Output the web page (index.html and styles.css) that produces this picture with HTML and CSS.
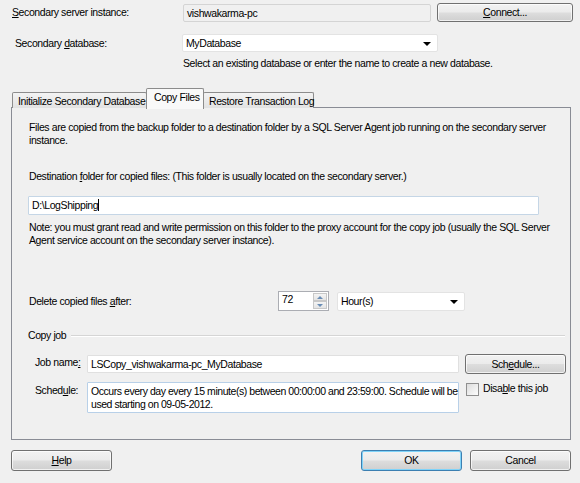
FILE: index.html
```html
<!DOCTYPE html>
<html>
<head>
<meta charset="utf-8">
<link rel="stylesheet" href="styles.css">
</head>
<body>
<div class="dlg">
  <div class="row r1">
    <span class="lbl l1"><u>S</u>econdary server instance:</span>
    <div class="ro">vishwakarma-pc</div>
    <button class="btn connect"><u>C</u>onnect...</button>
  </div>
  <div class="row r2">
    <span class="lbl l2">Secondary <u>d</u>atabase:</span>
    <div class="combo dbcombo"><span>MyDatabase</span><i class="arrow"></i></div>
  </div>
  <div class="hint">Select an existing database or enter the name to create a new database.</div>

  <div class="tabs">
    <div class="tab">Initialize Secondary Database</div>
    <div class="tab sel">Copy Files</div>
    <div class="tab">Restore Transaction Log</div>
  </div>
  <div class="panel">
    <p class="txt p1">Files are copied from the backup folder to a destination folder by a SQL Server Agent job running on the secondary server instance.</p>
    <p class="txt p2">Destination <u>f</u>older for copied files: (This folder is usually located on the secondary server.)</p>
    <div class="input dest">D:\LogShipping<span class="caret"></span></div>
    <p class="txt p3">Note: you must grant read and write permission on this folder to the proxy account for the copy job (usually the SQL Server Agent service account on the secondary server instance).</p>
    <div class="delrow">
      <span class="dellbl">Delete copied files <u>a</u>fter:</span>
      <div class="spin"><span>72</span><div class="spinbtns"><i class="up"></i><i class="dn"></i></div></div>
      <div class="combo hours"><span>Hour(s)</span><i class="arrow"></i></div>
    </div>
    <div class="group"><span>Copy job</span><span class="gline"></span></div>
    <div class="jobrow">
      <span class="jl">Job name<u>:</u></span>
      <div class="input job">LSCopy_vishwakarma-pc_MyDatabase</div>
      <button class="btn sched">Sch<u>e</u>dule...</button>
    </div>
    <div class="schrow">
      <span class="jl">Sched<u>u</u>le:</span>
      <div class="input schtxt">Occurs every day every 15 minute(s) between 00:00:00 and 23:59:00. Schedule will be used starting on 09-05-2012.</div>
      <label class="chk"><i class="box"></i><span>Disa<u>b</u>le this job</span></label>
    </div>
  </div>
  <div class="bottom">
    <button class="btn big"><u>H</u>elp</button>
    <div class="sp"></div>
    <button class="btn big ok">OK</button>
    <button class="btn big">Cancel</button>
  </div>
</div>
</body>
</html>
```
FILE: styles.css
```css
* { box-sizing: border-box; }
html, body { margin: 0; padding: 0; background: #f0f0f0; }
body { font-family: "Liberation Sans", Arial, sans-serif; font-size: 10.5px; letter-spacing: -0.4px; color: #000; line-height: 13px; width: 580px; height: 483px; overflow: hidden; }
u { text-decoration: underline; text-underline-offset: 1px; }
.dlg { padding-top: 3px; }
.row { display: flex; align-items: center; }
.lbl { display: block; white-space: nowrap; }
.l1 { margin-left: 12px; width: 171px; }
.l2 { margin-left: 15px; width: 167px; }
.ro { width: 248px; height: 18px; border: 1px solid #d4d4d4; border-radius: 2px; background: #f0f0f0; padding: 2px 3px; }
.btn { font: inherit; letter-spacing: inherit; color: #000; height: 19px; border: 1px solid #707070; border-radius: 3px; background: linear-gradient(#f2f2f2 0%, #ebebeb 48%, #dddddd 52%, #cfcfcf 100%); padding: 0; line-height: 15px; box-shadow: inset 0 0 0 1px rgba(255,255,255,0.7); }
.connect { width: 136px; margin-left: 6px; }
.r2 { margin-top: 12px; }
.combo { position: relative; background: #fff; border: 1px solid #e3e3e3; border-radius: 2px; height: 18px; padding: 2px 3px; }
.dbcombo { width: 256px; }
.arrow { position: absolute; right: 6px; top: 7px; width: 0; height: 0; border-left: 4px solid transparent; border-right: 4px solid transparent; border-top: 4px solid #000; }
.hint { margin: 5px 0 0 183px; }
.tabs { display: flex; margin: 18px 0 0 12px; align-items: flex-end; height: 20px; position: relative; z-index: 2; white-space: nowrap; }
.tab { height: 16px; border: 1px solid #8c8c8c; border-bottom: none; background: linear-gradient(#f3f3f3, #e2e2e2); padding: 2px 0 0 5px; margin-right: -1px; border-radius: 2px 2px 0 0; }
.tab:first-child { width: 135px; }
.tab.sel { height: 21px; background: #f9f9f9; border-color: #8c8c8c; padding: 2px 0 0 7px; margin-bottom: -1px; width: 58px; position: relative; z-index: 3; }
.tab:last-child { width: 111px; }
.panel { margin: -1px 0 0 11px; width: 560px; height: 333px; border: 1px solid #898c95; background: #f0f0f0; padding: 13px 0 0 17px; position: relative; z-index: 1; }
.txt { margin: 0; width: 530px; }
.p2 { margin-top: 23px; }
.input { background: #fff; border: 1px solid #abadb3; border-radius: 1px; padding: 2px 3px; }
.dest { width: 511px; height: 19px; margin: 13px 0 0 -1px; border-color: #c5d6e6; }
.caret { display: inline-block; width: 1px; height: 12px; background: #000; vertical-align: -2px; }
.p3 { margin-top: 6px; width: 528px; }
.delrow { display: flex; align-items: center; margin-top: 44px; }
.dellbl { width: 249px; }
.spin { width: 51px; height: 20px; border: 1px solid #abadb3; background: #fff; display: flex; justify-content: space-between; padding: 1px 1px 1px 3px; }
.spinbtns { width: 14px; display: flex; flex-direction: column; }
.spinbtns i { flex: 1; border: 1px solid #c8c8c8; background: linear-gradient(#f4f4f4, #e4e4e4); position: relative; }
.spinbtns i::after { content: ""; position: absolute; left: 3px; top: 2px; border-left: 3px solid transparent; border-right: 3px solid transparent; }
.spinbtns .up::after { border-bottom: 3px solid #6a8db5; }
.spinbtns .dn::after { border-top: 3px solid #6a8db5; }
.hours { width: 128px; height: 19px; margin-left: 8px; }
.group { display: flex; align-items: center; margin: 18px 0 0 -1px; }
.gline { flex: 1; height: 2px; border-top: 1px solid #d5d5d5; border-bottom: 1px solid #fff; margin: 0 5px 0 5px; }
.jobrow { display: flex; align-items: center; margin-top: 12px; height: 20px; }
.jl { width: 52px; margin-left: 6px; align-self: flex-start; padding-top: 2px; white-space: nowrap; }
.job { width: 372px; height: 18px; border-color: #e0e0e0; }
.sched { width: 101px; height: 20px; margin-left: 6px; }
.schrow { display: flex; margin-top: 8px; }
.schtxt { width: 372px; height: 31px; border-color: #b8d0e8; padding: 2px 0 2px 3px; line-height: 13px; letter-spacing: -0.45px; }
.chk { display: flex; margin-left: 7px; }
.box { width: 13px; height: 13px; border: 1px solid #8f8f8f; background: linear-gradient(135deg, #dcdcdc, #fdfdfd); margin-top: 1px; margin-right: 4px; }
.bottom { display: flex; margin: 10px 0 0 11px; width: 560px; }
.sp { flex: 1; }
.big { width: 101px; height: 21px; }
.ok { margin-right: 8px; border-color: #3c7fb1; box-shadow: inset 0 0 0 1px #7fd3f9; }
```
